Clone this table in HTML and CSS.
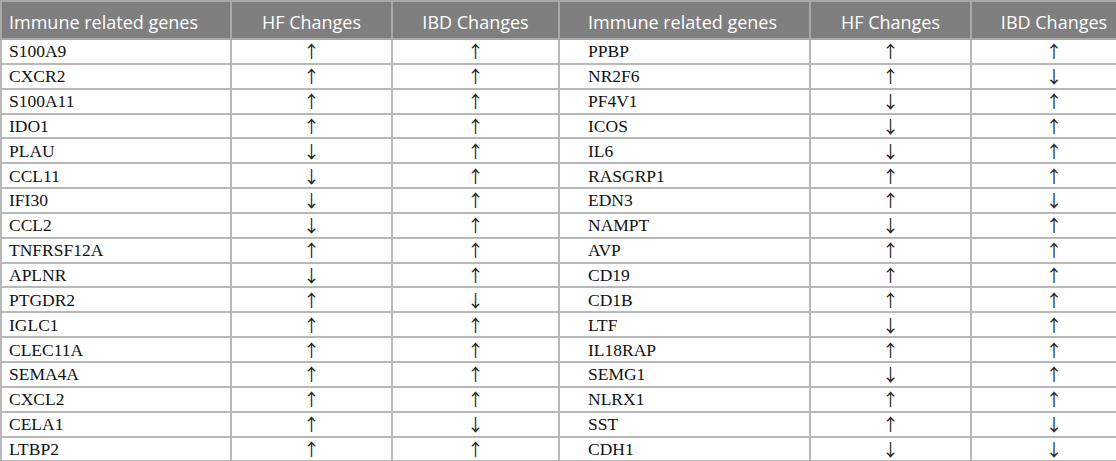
FILE: index.html
```html
<!DOCTYPE html>
<html>
<head>
<meta charset="utf-8">
<link rel="stylesheet" href="styles.css">
</head>
<body>
<table class="genes">
  <colgroup>
    <col class="c1"><col class="c2"><col class="c3"><col class="c4"><col class="c5"><col class="c6">
  </colgroup>
  <thead>
    <tr>
      <th class="g1">Immune related genes</th>
      <th>HF Changes</th>
      <th>IBD Changes</th>
      <th class="g2">Immune related genes</th>
      <th>HF Changes</th>
      <th class="last">IBD Changes</th>
    </tr>
  </thead>
  <tbody>
    <tr><td class="g1">S100A9</td><td class="ar">↑</td><td class="ar">↑</td><td class="g2">PPBP</td><td class="ar">↑</td><td class="ar last">↑</td></tr>
    <tr><td class="g1">CXCR2</td><td class="ar">↑</td><td class="ar">↑</td><td class="g2">NR2F6</td><td class="ar">↑</td><td class="ar last">↓</td></tr>
    <tr><td class="g1">S100A11</td><td class="ar">↑</td><td class="ar">↑</td><td class="g2">PF4V1</td><td class="ar">↓</td><td class="ar last">↑</td></tr>
    <tr><td class="g1">IDO1</td><td class="ar">↑</td><td class="ar">↑</td><td class="g2">ICOS</td><td class="ar">↓</td><td class="ar last">↑</td></tr>
    <tr><td class="g1">PLAU</td><td class="ar">↓</td><td class="ar">↑</td><td class="g2">IL6</td><td class="ar">↓</td><td class="ar last">↑</td></tr>
    <tr><td class="g1">CCL11</td><td class="ar">↓</td><td class="ar">↑</td><td class="g2">RASGRP1</td><td class="ar">↑</td><td class="ar last">↑</td></tr>
    <tr><td class="g1">IFI30</td><td class="ar">↓</td><td class="ar">↑</td><td class="g2">EDN3</td><td class="ar">↑</td><td class="ar last">↓</td></tr>
    <tr><td class="g1">CCL2</td><td class="ar">↓</td><td class="ar">↑</td><td class="g2">NAMPT</td><td class="ar">↓</td><td class="ar last">↑</td></tr>
    <tr><td class="g1">TNFRSF12A</td><td class="ar">↑</td><td class="ar">↑</td><td class="g2">AVP</td><td class="ar">↑</td><td class="ar last">↑</td></tr>
    <tr><td class="g1">APLNR</td><td class="ar">↓</td><td class="ar">↑</td><td class="g2">CD19</td><td class="ar">↑</td><td class="ar last">↑</td></tr>
    <tr><td class="g1">PTGDR2</td><td class="ar">↑</td><td class="ar">↓</td><td class="g2">CD1B</td><td class="ar">↑</td><td class="ar last">↑</td></tr>
    <tr><td class="g1">IGLC1</td><td class="ar">↑</td><td class="ar">↑</td><td class="g2">LTF</td><td class="ar">↓</td><td class="ar last">↑</td></tr>
    <tr><td class="g1">CLEC11A</td><td class="ar">↑</td><td class="ar">↑</td><td class="g2">IL18RAP</td><td class="ar">↑</td><td class="ar last">↑</td></tr>
    <tr><td class="g1">SEMA4A</td><td class="ar">↑</td><td class="ar">↑</td><td class="g2">SEMG1</td><td class="ar">↓</td><td class="ar last">↑</td></tr>
    <tr><td class="g1">CXCL2</td><td class="ar">↑</td><td class="ar">↑</td><td class="g2">NLRX1</td><td class="ar">↑</td><td class="ar last">↑</td></tr>
    <tr><td class="g1">CELA1</td><td class="ar">↑</td><td class="ar">↓</td><td class="g2">SST</td><td class="ar">↑</td><td class="ar last">↓</td></tr>
    <tr><td class="g1">LTBP2</td><td class="ar">↑</td><td class="ar">↑</td><td class="g2">CDH1</td><td class="ar">↓</td><td class="ar last">↓</td></tr>
  </tbody>
</table>
</body>
</html>
```

FILE: styles.css
```css
html, body {
  margin: 0;
  padding: 0;
  background: #ffffff;
}

.genes {
  width: 1116px;
  table-layout: fixed;
  border-collapse: collapse;
  font-family: "Liberation Serif", serif;
  color: #111111;
}

.c1 { width: 230px; }
.c2 { width: 161px; }
.c3 { width: 167px; }
.c4 { width: 251px; }
.c5 { width: 161px; }
.c6 { width: 146px; }

.genes th,
.genes td {
  border: 2px solid #b8b8b8;
  text-align: center;
  padding: 0;
  white-space: nowrap;
  overflow: hidden;
}

.genes th {
  height: 32px;
  background: #7f7f7f;
  color: #ffffff;
  font-family: "Open Sans", sans-serif;
  font-weight: 400;
  font-size: 18px;
  line-height: 22px;
  padding-top: 4px;
  border-color: #a9a9a9;
}

.genes td {
  height: 22.85px;
  font-size: 17.5px;
  line-height: 20px;
}

.genes td.ar {
  font-family: "Noto Sans CJK SC", "DejaVu Sans", sans-serif;
  font-size: 17px;
  color: #222222;
}

.genes .g1 {
  text-align: left;
  padding-left: 7px;
}

.genes .g2 {
  text-align: left;
  padding-left: 28px;
}

.genes .last {
  padding-left: 20px;
}
```
